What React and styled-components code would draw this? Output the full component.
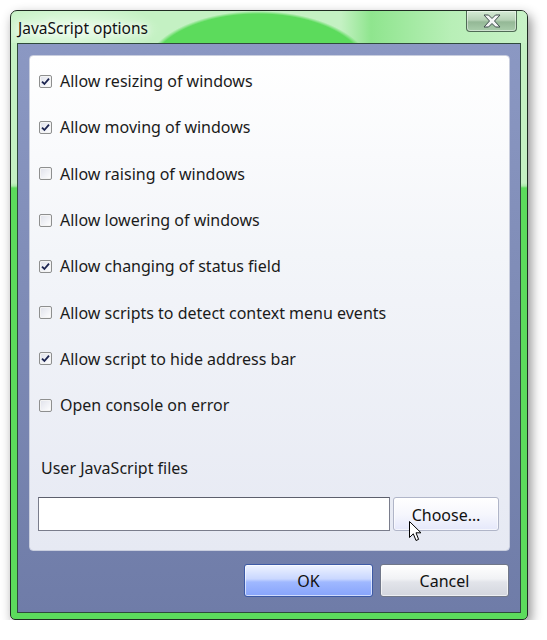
import React from "react";
import styled, { createGlobalStyle } from "styled-components";

const GlobalStyle = createGlobalStyle`
  html, body {
    margin: 0;
    background: #ffffff;
  }
  body {
    font-family: "Noto Sans", "Open Sans", "Liberation Sans", sans-serif;
    color: #1b1b1b;
  }
`;

const Window = styled.div`
  position: relative;
  margin: 10px 0 0 10px;
  width: 518px;
  height: 610px;
  box-sizing: border-box;
  border: 1px solid #1f2b22;
  border-radius: 7px 7px 5px 5px;
  background: linear-gradient(
    to bottom,
    #c4f1c3 0,
    #c4f1c3 172px,
    #a8eaa8 175px,
    #5cdb5c 177px,
    #5cdb5c 100%
  );
  box-shadow: 3px 5px 12px rgba(0, 0, 0, 0.45);
  display: flex;
  flex-direction: column;
  overflow: hidden;
`;

const TitleBar = styled.div`
  height: 32px;
  flex-shrink: 0;
  display: flex;
  align-items: flex-start;
  justify-content: space-between;
  padding: 0 10px 0 7px;
  background:
    radial-gradient(ellipse 90px 26px at 60px 18px, rgba(240, 255, 240, 0.85), rgba(240, 255, 240, 0) 100%),
    radial-gradient(ellipse 114px 60px at 247px 60px, #5cdb5c 95%, rgba(92, 219, 92, 0) 100%),
    linear-gradient(to right, rgba(196, 241, 195, 0) 330px, #8fe58e 360px, #b8efb7 440px, #c8f2c7 100%);
`;

const TitleText = styled.span`
  font-size: 15.5px;
  line-height: 34px;
  color: #111;
  text-shadow: 0 0 6px #ffffff, 0 0 10px #ffffff;
`;

const CloseButton = styled.div`
  width: 51px;
  height: 21px;
  box-sizing: border-box;
  border: 1px solid #4f6a55;
  border-top: none;
  border-radius: 0 0 4px 4px;
  background: linear-gradient(to bottom, #d6ecd6 0%, #b6d2b6 45%, #94b896 55%, #a9cdab 100%);
  box-shadow: inset 0 0 0 1px rgba(255, 255, 255, 0.45);
  display: flex;
  align-items: center;
  justify-content: center;
`;

const Client = styled.div`
  flex: 1;
  margin: 0 6px 6px 6px;
  border: 1px solid #2f4a3c;
  background: linear-gradient(to bottom, #8b98c3 0%, #7d8ab5 50%, #6f7ca8 100%);
  padding: 11px 10px 15px 11px;
  display: flex;
  flex-direction: column;
  gap: 13px;
`;

const Panel = styled.div`
  height: 496px;
  box-sizing: border-box;
  border: 1px solid #c9cede;
  border-radius: 4px;
  background: linear-gradient(to bottom, #ffffff 0%, #f3f5f9 40%, #e6e9f3 100%);
  padding: 2px 0 0 9px;
  display: flex;
  flex-direction: column;
`;

const OptionRow = styled.label`
  height: 46.3px;
  display: flex;
  align-items: center;
  gap: 8px;
  font-size: 16px;
  color: #1b1b1b;
`;

const Box = styled.span`
  width: 13px;
  height: 13px;
  box-sizing: border-box;
  border: 1px solid #8e8f8f;
  border-radius: 2px;
  background: linear-gradient(135deg, #dfe1ea 0%, #f2f3f7 60%, #ffffff 100%);
  box-shadow: inset 0 0 0 1px #f4f4f4;
  display: flex;
  align-items: center;
  justify-content: center;
  flex-shrink: 0;
`;

const FilesLabel = styled.div`
  margin: 30px 0 0 2px;
  font-size: 16px;
  line-height: 20px;
`;

const FileRow = styled.div`
  position: relative;
  margin: 19px 0 0 -1px;
  display: flex;
  gap: 3px;
`;

const PathInput = styled.div`
  width: 352px;
  height: 34px;
  box-sizing: border-box;
  border: 1px solid #7a7d8c;
  border-top-color: #5c5f6c;
  background: #ffffff;
`;

const Button = styled.div`
  height: ${({ $h }) => $h || 33}px;
  width: ${({ $w }) => $w}px;
  box-sizing: border-box;
  border: 1px solid ${({ $primary }) => ($primary ? "#3d5aa6" : "#707789")};
  border-radius: 3px;
  background: ${({ $primary }) =>
    $primary
      ? "linear-gradient(to bottom, #eef3ff 0%, #c9d7ff 45%, #9fb8ff 55%, #87a4fb 100%)"
      : "linear-gradient(to bottom, #ffffff 0%, #f1f2f5 45%, #e2e4ea 55%, #d3d6de 100%)"};
  box-shadow: inset 0 0 0 1px rgba(255, 255, 255, 0.6);
  display: flex;
  align-items: center;
  justify-content: center;
  font-size: 16px;
  color: #111;
`;

const ChooseButton = styled(Button)`
  border-color: #b0b5c8;
  background: linear-gradient(to bottom, #ffffff 0%, #f6f7fd 50%, #e5e8fb 100%);
  padding-top: 1px;
`;

const ButtonRow = styled.div`
  display: flex;
  justify-content: flex-end;
  gap: 7px;
  padding-right: 1px;
`;

const Cursor = styled.svg`
  position: absolute;
  left: 371px;
  top: 24px;
`;

const options = [
  { label: "Allow resizing of windows", checked: true },
  { label: "Allow moving of windows", checked: true },
  { label: "Allow raising of windows", checked: false },
  { label: "Allow lowering of windows", checked: false },
  { label: "Allow changing of status field", checked: true },
  { label: "Allow scripts to detect context menu events", checked: false },
  { label: "Allow script to hide address bar", checked: true },
  { label: "Open console on error", checked: false },
];

const Check = () => (
  <svg width="9" height="9" viewBox="0 0 9 9">
    <path d="M1 4.6 L3.4 7 L8 1.6" fill="none" stroke="#1c2450" strokeWidth="1.8" />
  </svg>
);

const CloseGlyph = () => (
  <svg width="18" height="14" viewBox="0 0 18 14">
    <polygon
      points="1,1 5.5,1 9,4.5 12.5,1 17,1 11.5,7 17,13 12.5,13 9,9.5 5.5,13 1,13 6.5,7"
      fill="#f4f6f6"
      stroke="#3e4c4c"
      strokeWidth="1"
      strokeLinejoin="round"
    />
  </svg>
);

export default function App() {
  return (
    <>
      <GlobalStyle />
      <Window>
        <TitleBar>
          <TitleText>JavaScript options</TitleText>
          <CloseButton>
            <CloseGlyph />
          </CloseButton>
        </TitleBar>
        <Client>
          <Panel>
            {options.map((o) => (
              <OptionRow key={o.label}>
                <Box>{o.checked && <Check />}</Box>
                {o.label}
              </OptionRow>
            ))}
            <FilesLabel>User JavaScript files</FilesLabel>
            <FileRow>
              <PathInput />
              <ChooseButton $w={106} $h={34}>Choose…</ChooseButton>
              <Cursor width="13" height="21" viewBox="0 0 13 21">
                <path
                  d="M0.5 0.5 L0.5 16.5 L4.3 12.8 L7 19.5 L9.6 18.4 L7 11.8 L12 11.8 Z"
                  fill="#ffffff"
                  stroke="#000000"
                  strokeWidth="1"
                  strokeLinejoin="round"
                />
              </Cursor>
            </FileRow>
          </Panel>
          <ButtonRow>
            <Button $primary $w={129}>OK</Button>
            <Button $w={129}>Cancel</Button>
          </ButtonRow>
        </Client>
      </Window>
    </>
  );
}
